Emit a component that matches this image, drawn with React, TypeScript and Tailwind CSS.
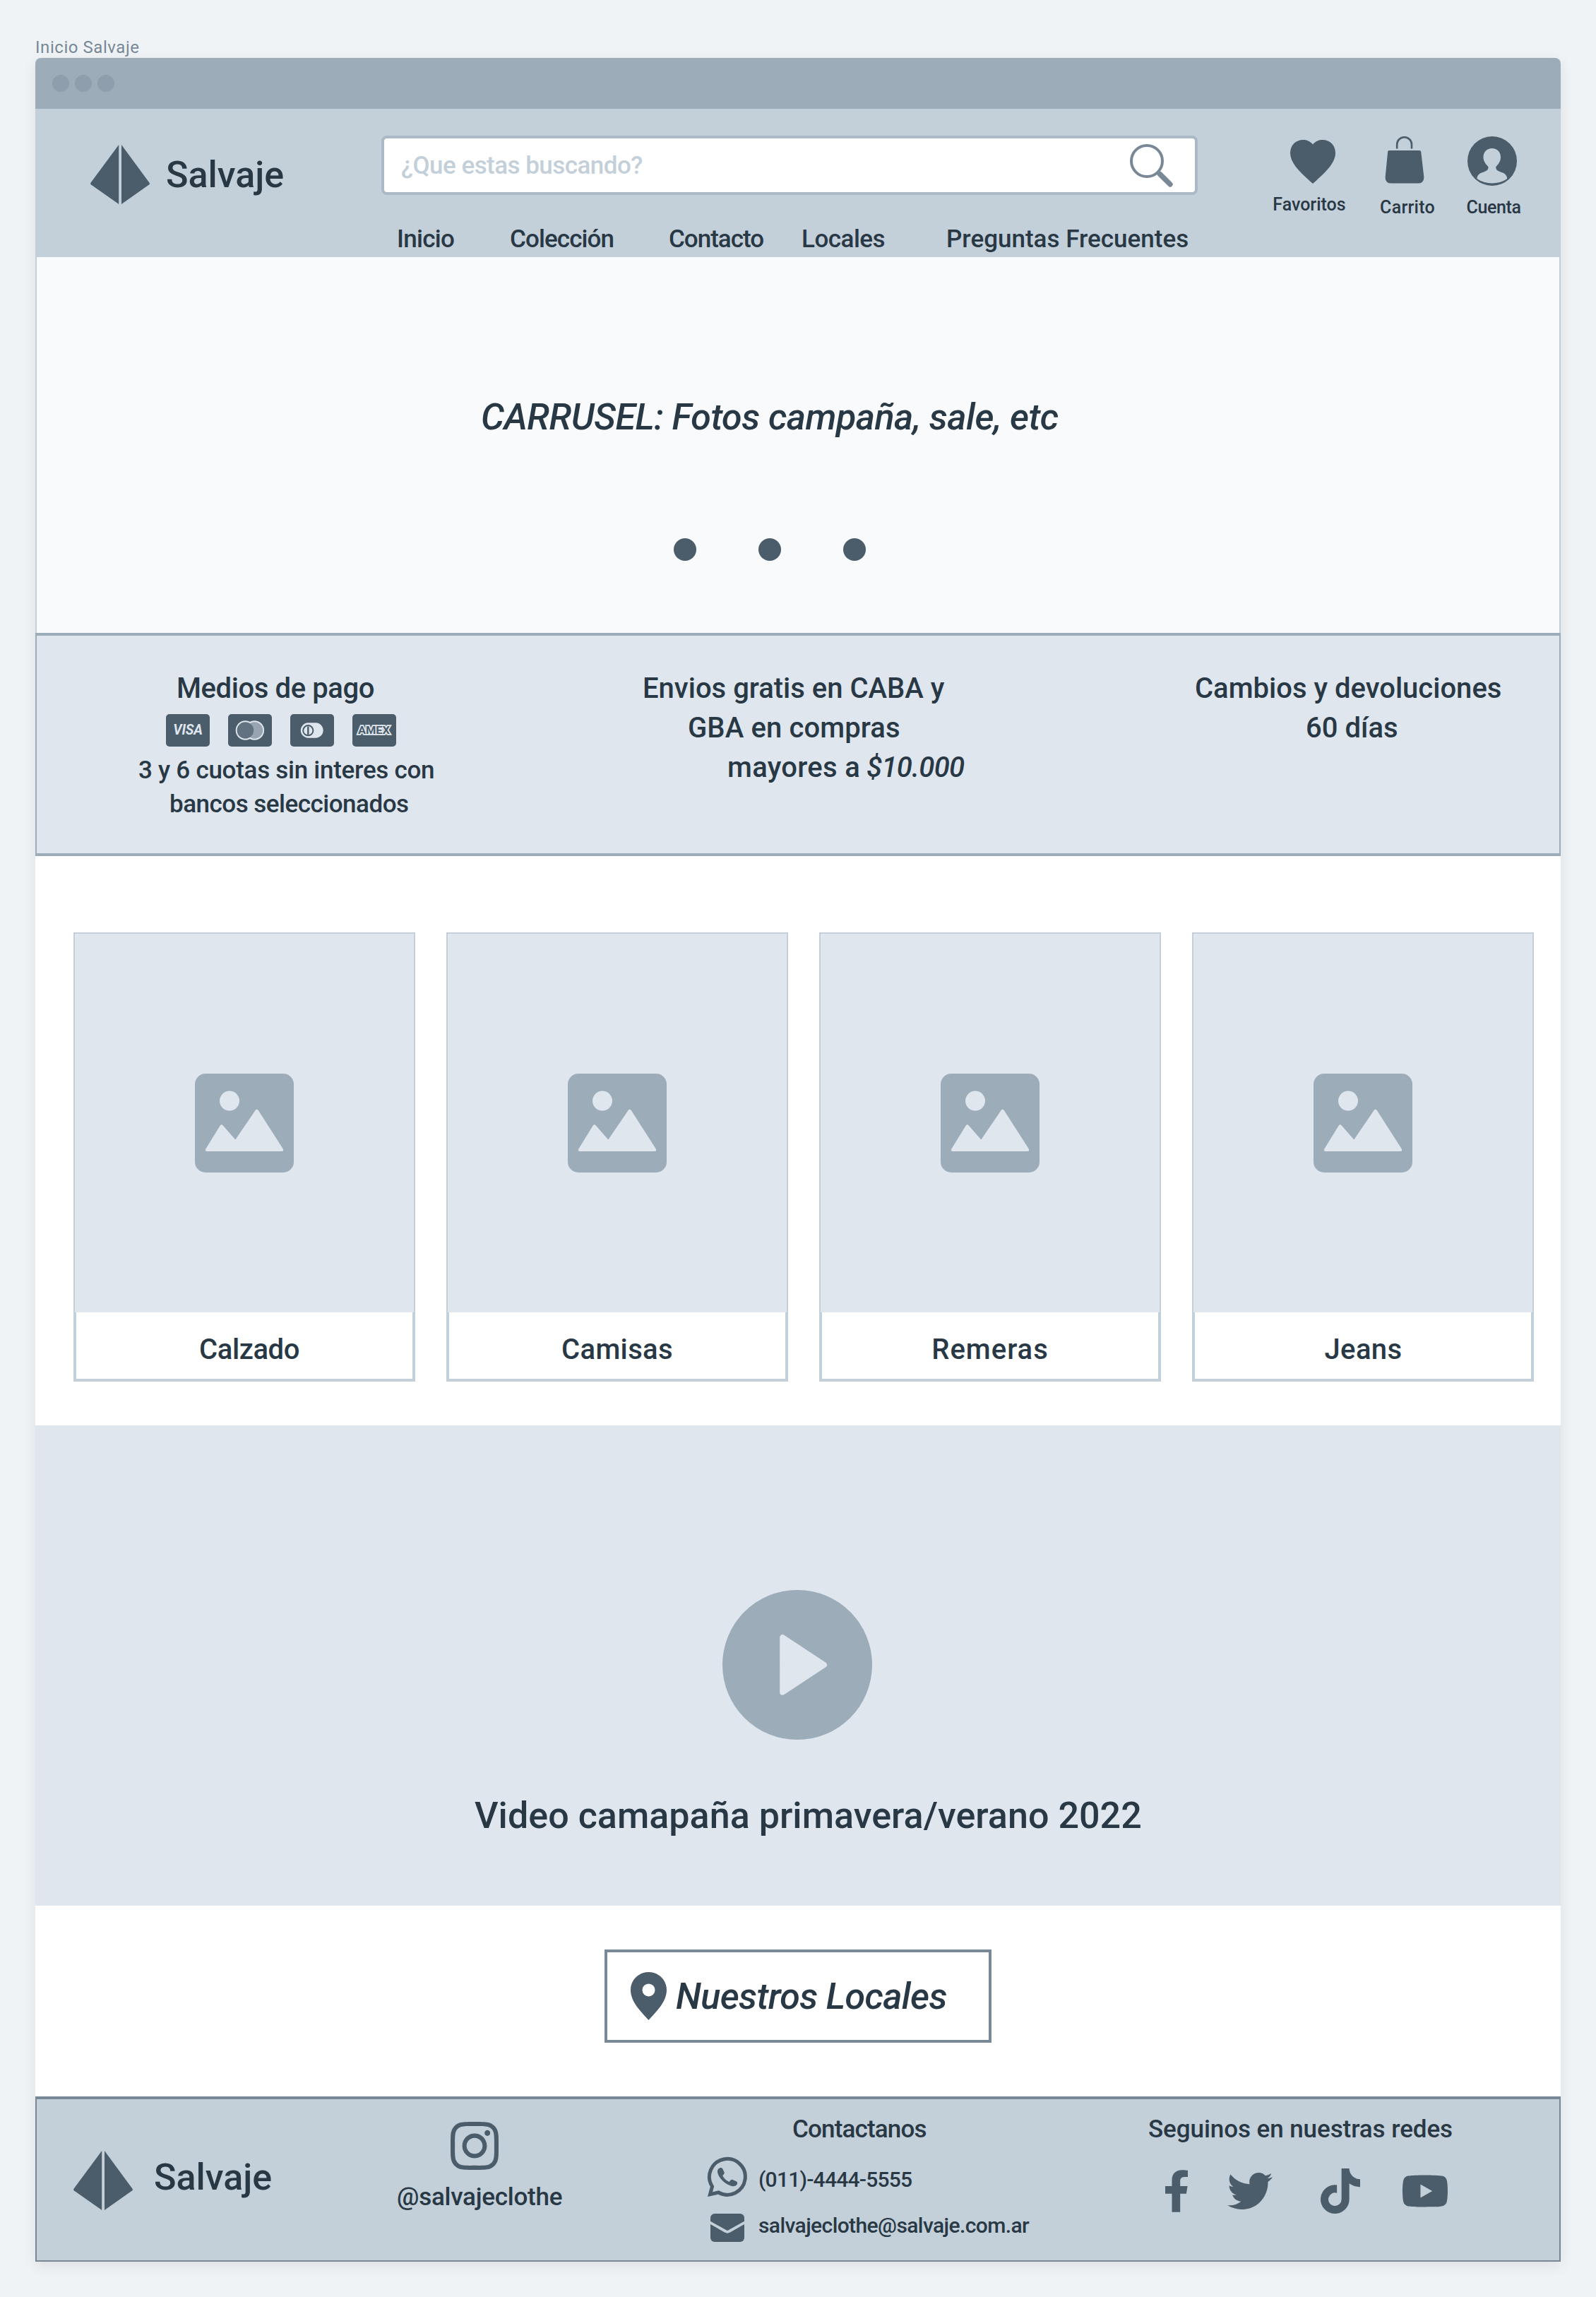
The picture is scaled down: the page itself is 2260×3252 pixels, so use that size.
import { FaInstagram, FaTiktok, FaTwitter, FaYoutube } from 'react-icons/fa';

function Logo() {
  return (
    <svg viewBox="0 0 84 84" className="size-[84px] shrink-0 fill-[#4b5c6a]">
      <path d="M40.2 0V84L.7 56.3Q-.4 55.1.5 53.7Z" />
      <path d="M44 0V84L83.3 56.3Q84.4 55.1 83.5 53.7Z" />
    </svg>
  );
}

function SearchIcon() {
  return (
    <svg viewBox="0 0 61 61" className="size-[61px] fill-none stroke-[#788896]">
      <circle cx="24" cy="24" r="22" strokeWidth="4" />
      <path d="M42.3 42.3L57 57" strokeWidth="7.4" strokeLinecap="round" />
    </svg>
  );
}

function HeartIcon() {
  return (
    <svg viewBox="0 0 64 62" className="ml-[10px] h-[62px] w-[64px] fill-[#4b5c6a]">
      <path d="M32 6.6C28 1.5 23 0 18.5 0 7.5 0 0 8 0 18.5 0 33 14 46 32 62 50 46 64 33 64 18.5 64 8 56.5 0 45.5 0 41 0 36 1.5 32 6.6Z" />
    </svg>
  );
}

function BagIcon() {
  return (
    <svg viewBox="0 0 56 67" className="mr-[9px] h-[67px] w-[56px] fill-[#4b5c6a]">
      <path d="M17.2 17.5V11.6a10.4 10.4 0 0 1 20.8 0V17.5" fill="none" stroke="#4b5c6a" strokeWidth="2.6" />
      <path d="M6 20H49.2Q51 20 51.2 21.8L55.3 57Q55.8 66.5 47 66.5H9Q.2 66.5.7 57L4.2 21.8Q4.4 20 6 20Z" />
    </svg>
  );
}

function UserIcon() {
  return (
    <svg viewBox="0 0 70 70" className="mr-[5px] size-[70px]">
      <circle cx="35" cy="35" r="35" fill="#4b5c6a" />
      <path
        d="M34.8 17C42 17 47 22 47 29.5 47 36 43.3 40 40.2 43.2 40.2 49 45 49.5 50 51.6 54 53.5 56 56 56.2 60Q48 66.4 34.8 66.4 22 66.4 13.5 60C13.7 56 15.5 53.5 20 51.6 25 49.5 29.6 49 29.6 43.2 26.5 40 22.5 36 22.5 29.5 22.5 22 27.6 17 34.8 17Z"
        fill="#c3cfd9"
      />
    </svg>
  );
}

function PictureIcon() {
  return (
    <svg viewBox="0 0 140 140" className="size-[140px]">
      <rect width="140" height="140" rx="15" fill="#9dacb9" />
      <circle cx="49" cy="38.6" r="14" fill="#dfe6ee" />
      <path
        d="M15.5 106.3L35.6 73.8Q37.5 71 39.8 73.6L57.3 93.5 85.6 52Q87.6 49 89.8 52L124.6 106.3Q126.5 110 122.6 110H17.4Q13.6 110 15.5 106.3Z"
        fill="#dfe6ee"
      />
    </svg>
  );
}

function PlayIcon() {
  return (
    <svg viewBox="0 0 212 212" className="size-[212px]">
      <circle cx="106" cy="106" r="106" fill="#9dacb9" />
      <path
        d="M85 67V145L144.2 106Z"
        fill="#dfe6ee"
        stroke="#dfe6ee"
        strokeWidth="7.6"
        strokeLinejoin="round"
      />
    </svg>
  );
}

function PinIcon() {
  return (
    <svg viewBox="0 0 51 68" className="h-[68px] w-[51px] fill-[#4b5c6a]">
      <path
        fillRule="evenodd"
        d="M25.5 0C39.6 0 51 11.2 51 25.2 51 42.5 36 56 25.5 68 15 56 0 42.5 0 25.2 0 11.2 11.4 0 25.5 0ZM25.5 16.4a9 9 0 1 0 0 18 9 9 0 0 0 0-18Z"
      />
    </svg>
  );
}

function WhatsappIcon() {
  return (
    <svg viewBox="0 0 56 56" className="size-14 shrink-0 overflow-visible fill-[#4b5c6a]">
      <path
        d="M6.5 41.5L3.5 52.7 15.5 50A25.4 25.4 0 1 0 6.5 41.5Z"
        fill="none"
        stroke="#4b5c6a"
        strokeWidth="5"
      />
      <path d="M17.5 15.2C19.5 14.6 20.8 15.2 21.5 17L23.7 21.8C24.2 23.3 22.5 25 21.2 26 22.5 29.5 26 33 30.5 35 31.8 33.5 33.3 31.2 35 31.8L40.5 34.3C42 35 42.5 36.3 41.9 38 40.7 40.7 37.3 41.6 34.5 41 25 39 14.5 28.5 14 20.5 13.9 17.8 15.3 15.8 17.5 15.2Z" />
    </svg>
  );
}

function MailIcon() {
  return (
    <svg viewBox="0 0 48 40" className="h-10 w-12 shrink-0">
      <rect width="48" height="40" rx="6" fill="#4b5c6a" />
      <path d="M-2 11.8L21.5 25Q24 26.6 26.5 25L50 11.8" fill="none" stroke="#c3cfd9" strokeWidth="3.8" />
    </svg>
  );
}

function FacebookIcon() {
  return (
    <svg viewBox="22.89 0 274.3 512" className="h-[60px] w-[32px] fill-[#4b5c6a]">
      <path d="M279.14 288l14.22-92.66h-88.91v-60.13c0-25.35 12.42-50.06 52.24-50.06h40.42V6.26S260.43 0 225.36 0c-73.22 0-121.08 44.38-121.08 124.72v70.62H22.89V288h81.39v224h100.17V288z" />
    </svg>
  );
}

function PaymentCards() {
  return (
    <div className="flex gap-[26px]">
      <div className="flex h-[46px] w-[62px] items-center justify-center rounded-[5px] bg-[#4b5c6a] text-[19.5px] font-bold tracking-[-0.2px] text-[#dfe6ee] italic">
        VISA
      </div>
      <svg viewBox="0 0 62 46" className="h-[46px] w-[62px] rounded-[5px] bg-[#4b5c6a]">
        <circle cx="24.4" cy="23" r="13.7" fill="#dfe6ee" />
        <circle cx="37.4" cy="23" r="13.7" fill="#dfe6ee" />
        <circle cx="37.4" cy="23" r="11.8" fill="#98a4b1" />
        <circle cx="24.4" cy="23" r="11.8" fill="#637280" />
      </svg>
      <svg viewBox="0 0 62 46" className="h-[46px] w-[62px] rounded-[5px] bg-[#4b5c6a]">
        <path d="M25.5 12.3H36a10.7 10.7 0 0 1 0 21.4H25.5a10.7 10.7 0 0 1 0-21.4Z" fill="#dfe6ee" />
        <circle cx="25.3" cy="23.2" r="7.1" fill="#dfe6ee" stroke="#4b5c6a" strokeWidth="2" />
        <path d="M25.3 17.5V29" stroke="#4b5c6a" strokeWidth="2.4" />
      </svg>
      <svg viewBox="0 0 62 46" className="h-[46px] w-[62px] rounded-[5px] bg-[#4b5c6a]">
        <text
          x="8"
          y="28.4"
          textLength="45"
          lengthAdjust="spacingAndGlyphs"
          fill="#4b5c6a"
          stroke="#dfe6ee"
          strokeWidth="3.4"
          paintOrder="stroke"
          className="text-[15px] font-bold"
        >
          AMEX
        </text>
      </svg>
    </div>
  );
}

function Header() {
  return (
    <header className="flex h-[210px] bg-[#c3cfd9]">
      <div className="flex w-[490px] items-center gap-[23px] self-start pt-[51px] pl-[78px]">
        <Logo />
        <span className="pt-px text-[52px] leading-[60px]">Salvaje</span>
      </div>

      <div className="w-[1156px] pt-[38px]">
        <div className="flex h-[84px] items-center justify-between rounded-[8px] border-4 border-[#abb9c6] bg-white pr-[31px] pl-6">
          <span className="pt-[3px] text-[35px] tracking-[-0.53px] text-[#c3cfd9]">¿Que estas buscando?</span>
          <SearchIcon />
        </div>
        <nav className="mt-[39px] grid grid-cols-[160px_225px_188px_205px_auto] pl-[22px] text-[35px] leading-[48px] whitespace-nowrap">
          <span className="tracking-[-0.7px]">Inicio</span>
          <span className="tracking-[-0.9px]">Colección</span>
          <span className="tracking-[-1px]">Contacto</span>
          <span className="tracking-[-0.5px]">Locales</span>
          <span>Preguntas Frecuentes</span>
        </nav>
      </div>

      <div className="flex pl-[98px] text-[25px] leading-[30px]">
        <div className="mr-[19px] flex w-[120px] flex-col items-center pt-[44px]">
          <HeartIcon />
          <span className="mt-[15px]">Favoritos</span>
        </div>
        <div className="mr-[2px] flex w-[120px] flex-col items-center pt-[39px]">
          <BagIcon />
          <span className="mt-[19px] tracking-[0.25px]">Carrito</span>
        </div>
        <div className="flex w-[120px] flex-col items-center pt-[39px]">
          <UserIcon />
          <span className="mt-[16px] tracking-[-0.37px]">Cuenta</span>
        </div>
      </div>
    </header>
  );
}

function Carousel() {
  return (
    <section className="h-[532px] border-x-2 border-[#c3cfd9] bg-[#f8fafc] pt-[197px]">
      <p className="pl-[629px] text-[52px] leading-[60px] tracking-[-0.5px] italic">
        CARRUSEL: Fotos campaña, sale, etc
      </p>
      <div className="mt-[141px] flex gap-[88px] pl-[902px]">
        <span className="size-8 rounded-full bg-[#4b5c6a]" />
        <span className="size-8 rounded-full bg-[#4b5c6a]" />
        <span className="size-8 rounded-full bg-[#4b5c6a]" />
      </div>
    </section>
  );
}

function Benefits() {
  return (
    <section className="grid h-[316px] grid-cols-[858px_782px_auto] border-x-2 border-y-4 border-[#9dacb9] bg-[#dfe6ee] pt-[47px] text-[40px] leading-[56px] whitespace-nowrap">
      <div>
        <p className="pl-[198px] tracking-[-0.4px]">Medios de pago</p>
        <div className="mt-2 pl-[183px]">
          <PaymentCards />
        </div>
        <p className="mt-[10px] pl-[144px] text-[35px] leading-[48px] tracking-[-0.27px]">
          3 y 6 cuotas sin interes con
        </p>
        <p className="pl-[188px] text-[35px] leading-[48px] tracking-[-0.5px]">bancos seleccionados</p>
      </div>
      <div>
        <p>Envios gratis en CABA y</p>
        <p className="pl-[64px] tracking-[0.12px]">GBA en compras</p>
        <p className="flex pl-[120px]">
          <span className="w-[197px] tracking-[0.3px]">mayores a</span>
          <span className="tracking-[-0.67px] italic">$10.000</span>
        </p>
      </div>
      <div>
        <p>Cambios y devoluciones</p>
        <p className="pl-[157px]">60 días</p>
      </div>
    </section>
  );
}

const categories = [
  { name: 'Calzado', className: 'pl-[14px] tracking-[-0.41px]' },
  { name: 'Camisas', className: 'tracking-[0.36px]' },
  { name: 'Remeras', className: 'tracking-[1px]' },
  { name: 'Jeans', className: 'pl-px tracking-[0.38px]' },
];

function Categories() {
  return (
    <section className="flex h-[806px] gap-[44px] bg-white pt-[108px] pl-[54px]">
      {categories.map((category) => (
        <article key={category.name} className="w-[484px]">
          <div className="flex h-[538px] items-center justify-center border-x-2 border-t-2 border-[#c3cfd9] bg-[#dfe6ee]">
            <PictureIcon />
          </div>
          <div className="flex h-[98px] items-center justify-center border-x-4 border-b-4 border-[#c3cfd9] pt-[12px] text-[40px] leading-[56px]">
            <span className={category.className}>{category.name}</span>
          </div>
        </article>
      ))}
    </section>
  );
}

function Video() {
  return (
    <section className="h-[680px] bg-[#dfe6ee] pt-[233px]">
      <div className="pl-[973px]">
        <PlayIcon />
      </div>
      <p className="mt-[78px] pl-[622px] text-[52px] leading-[60px] tracking-[0.04px]">
        Video camapaña primavera/verano 2022
      </p>
    </section>
  );
}

function Stores() {
  return (
    <section className="h-[270px] bg-white pt-[62px]">
      <button className="mx-auto flex h-[132px] w-[548px] items-center gap-[13px] border-4 border-[#788896] pl-[33px]">
        <PinIcon />
        <span className="pt-[2px] text-[52px] leading-[60px] tracking-[-0.6px] italic">Nuestros Locales</span>
      </button>
    </section>
  );
}

function Footer() {
  return (
    <footer className="grid h-[234px] grid-cols-[510px_440px_624px_auto] border-x-2 border-t-4 border-b-2 border-[#788896] bg-[#c3cfd9] text-[35px] leading-[48px] whitespace-nowrap">
      <div className="flex items-center gap-[30px] self-start pt-[73px] pl-[52px]">
        <Logo />
        <span className="pb-[8px] text-[52px] leading-[60px]">Salvaje</span>
      </div>

      <div className="pt-[27px]">
        <FaInstagram className="ml-[76px] h-[78px] w-[68px] fill-[#4b5c6a]" />
        <p className="mt-[10px] tracking-[-0.24px]">@salvajeclothe</p>
      </div>

      <div className="pt-[19px]">
        <p className="pl-[120px] tracking-[-0.84px]">Contactanos</p>
        <div className="mt-[15px] flex h-14 items-center gap-4 text-[30px] leading-[36px]">
          <WhatsappIcon />
          <span className="pt-[7px] tracking-[-0.77px]">(011)-4444-5555</span>
        </div>
        <div className="mt-6 flex h-10 items-center gap-5 pl-1 text-[30px] leading-[36px]">
          <MailIcon />
          <span className="pb-[7px] tracking-[-0.59px]">salvajeclothe@salvaje.com.ar</span>
        </div>
      </div>

      <div className="pt-[19px]">
        <p className="tracking-[-0.08px]">Seguinos en nuestras redes</p>
        <div className="mt-[31px] flex h-16 items-center pl-[24px] text-[#4b5c6a]">
          <FacebookIcon />
          <FaTwitter className="ml-[56px] size-16" />
          <FaTiktok className="ml-[68px] h-16 w-[56px]" />
          <FaYoutube className="ml-[58px] h-[60px] w-[68px]" />
        </div>
      </div>
    </footer>
  );
}

export default function App() {
  return (
    <div className="h-[3252px] w-[2260px] overflow-hidden bg-[#eff3f6] pt-[52px] pl-[50px] font-['Roboto',sans-serif] font-medium text-[#283845]">
      <p className="h-[30px] text-[24px] leading-[30px] font-normal tracking-[0.55px] text-[#788896]">
        Inicio Salvaje
      </p>
      <main className="w-[2160px] rounded-t-[8px] shadow-[0_6px_20px_rgba(0,0,0,0.08)]">
        <div className="flex h-[72px] items-center gap-2 rounded-t-[8px] bg-[#9dacb9] pl-6">
          <span className="size-6 rounded-full bg-[#8f9eac]" />
          <span className="size-6 rounded-full bg-[#8f9eac]" />
          <span className="size-6 rounded-full bg-[#8f9eac]" />
        </div>
        <Header />
        <Carousel />
        <Benefits />
        <Categories />
        <Video />
        <Stores />
        <Footer />
      </main>
    </div>
  );
}
